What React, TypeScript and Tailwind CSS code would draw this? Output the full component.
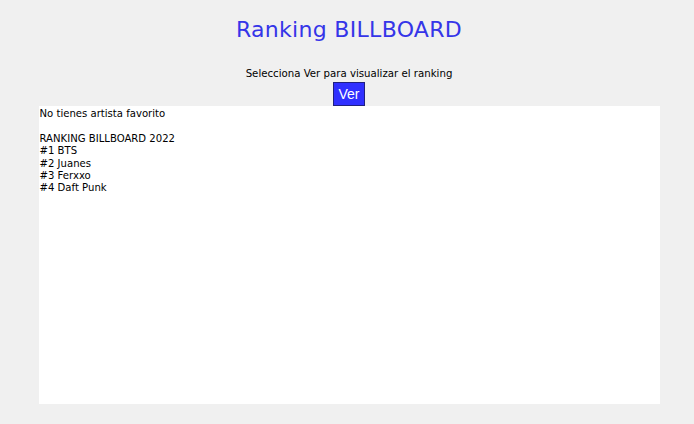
export default function App() {
  const ranking = ["#1 BTS", "#2 Juanes", "#3 Ferxxo", "#4 Daft Punk"];

  return (
    <div className="min-h-[424px] bg-[#f0f0f0] pl-[4px] flex flex-col items-center font-['DejaVu_Sans',sans-serif] text-black">
      <h1 className="mt-[14px] h-[32px] text-[22px] leading-[32px] text-[#3535e8] font-['DejaVu_Sans',sans-serif] tracking-[0.3px]">
        Ranking BILLBOARD
      </h1>
      <p className="mt-[21px] text-[10.2px] leading-[13px]">Selecciona Ver para visualizar el ranking</p>
      <button className="mt-[2px] w-[32px] h-[24px] bg-[#3030ff] border border-[#202080] text-white text-[14px] leading-[20px] font-['Liberation_Sans',sans-serif]">
        Ver
      </button>
      <div className="w-[621px] h-[298px] bg-white pl-[1px] pt-[2px] text-[10.1px] leading-[12.4px]">
        <div>No tienes artista favorito</div>
        <div className="h-[12.4px]" />
        <div>RANKING BILLBOARD 2022</div>
        {ranking.map((r) => (
          <div key={r}>{r}</div>
        ))}
      </div>
    </div>
  );
}
